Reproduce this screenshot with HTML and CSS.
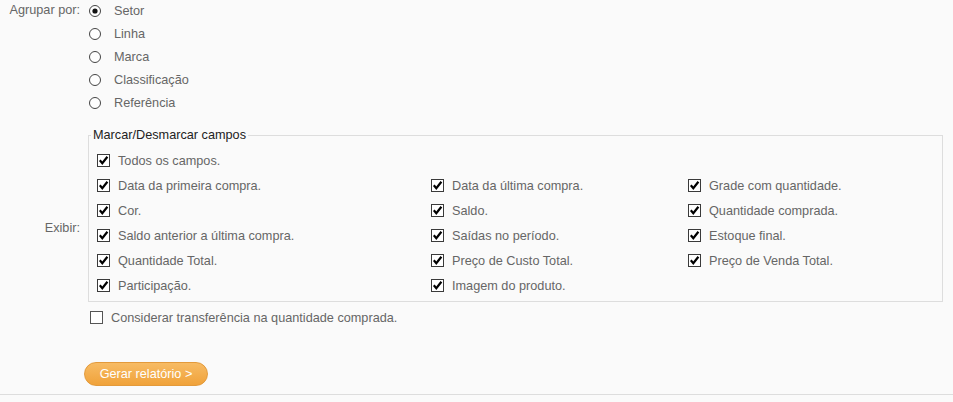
FILE: index.html
```html
<!DOCTYPE html>
<html lang="pt-BR">
<head>
    <meta charset="UTF-8">
    <title>Relatório</title>
    <link rel="stylesheet" href="styles.css">
</head>
<body>

<form class="relatorio">
    <div class="label">Agrupar por:</div>
    <div class="radios">
        <label class="opt"><svg class="radio" viewBox="0 0 12 12"><circle cx="6" cy="6" r="5.5"/><circle class="dot" cx="6" cy="6" r="2.6"/></svg>Setor</label>
        <label class="opt"><svg class="radio" viewBox="0 0 12 12"><circle cx="6" cy="6" r="5.5"/></svg>Linha</label>
        <label class="opt"><svg class="radio" viewBox="0 0 12 12"><circle cx="6" cy="6" r="5.5"/></svg>Marca</label>
        <label class="opt"><svg class="radio" viewBox="0 0 12 12"><circle cx="6" cy="6" r="5.5"/></svg>Classificação</label>
        <label class="opt"><svg class="radio" viewBox="0 0 12 12"><circle cx="6" cy="6" r="5.5"/></svg>Referência</label>
    </div>

    <div class="label exibir-label">Exibir:</div>
    <div class="exibir">
        <fieldset class="campos">
            <legend>Marcar/Desmarcar campos</legend>
            <div class="grade">
                <label class="chk todos"><svg class="box" viewBox="0 0 13 13"><rect x="0.5" y="0.5" width="12" height="12"/><polyline points="2.8,6.3 5.3,9.2 10.4,2.8"/></svg>Todos os campos.</label>

                <label class="chk"><svg class="box" viewBox="0 0 13 13"><rect x="0.5" y="0.5" width="12" height="12"/><polyline points="2.8,6.3 5.3,9.2 10.4,2.8"/></svg>Data da primeira compra.</label>
                <label class="chk"><svg class="box" viewBox="0 0 13 13"><rect x="0.5" y="0.5" width="12" height="12"/><polyline points="2.8,6.3 5.3,9.2 10.4,2.8"/></svg>Data da última compra.</label>
                <label class="chk"><svg class="box" viewBox="0 0 13 13"><rect x="0.5" y="0.5" width="12" height="12"/><polyline points="2.8,6.3 5.3,9.2 10.4,2.8"/></svg>Grade com quantidade.</label>

                <label class="chk"><svg class="box" viewBox="0 0 13 13"><rect x="0.5" y="0.5" width="12" height="12"/><polyline points="2.8,6.3 5.3,9.2 10.4,2.8"/></svg>Cor.</label>
                <label class="chk"><svg class="box" viewBox="0 0 13 13"><rect x="0.5" y="0.5" width="12" height="12"/><polyline points="2.8,6.3 5.3,9.2 10.4,2.8"/></svg>Saldo.</label>
                <label class="chk"><svg class="box" viewBox="0 0 13 13"><rect x="0.5" y="0.5" width="12" height="12"/><polyline points="2.8,6.3 5.3,9.2 10.4,2.8"/></svg>Quantidade comprada.</label>

                <label class="chk"><svg class="box" viewBox="0 0 13 13"><rect x="0.5" y="0.5" width="12" height="12"/><polyline points="2.8,6.3 5.3,9.2 10.4,2.8"/></svg>Saldo anterior a última compra.</label>
                <label class="chk"><svg class="box" viewBox="0 0 13 13"><rect x="0.5" y="0.5" width="12" height="12"/><polyline points="2.8,6.3 5.3,9.2 10.4,2.8"/></svg>Saídas no período.</label>
                <label class="chk"><svg class="box" viewBox="0 0 13 13"><rect x="0.5" y="0.5" width="12" height="12"/><polyline points="2.8,6.3 5.3,9.2 10.4,2.8"/></svg>Estoque final.</label>

                <label class="chk"><svg class="box" viewBox="0 0 13 13"><rect x="0.5" y="0.5" width="12" height="12"/><polyline points="2.8,6.3 5.3,9.2 10.4,2.8"/></svg>Quantidade Total.</label>
                <label class="chk"><svg class="box" viewBox="0 0 13 13"><rect x="0.5" y="0.5" width="12" height="12"/><polyline points="2.8,6.3 5.3,9.2 10.4,2.8"/></svg>Preço de Custo Total.</label>
                <label class="chk"><svg class="box" viewBox="0 0 13 13"><rect x="0.5" y="0.5" width="12" height="12"/><polyline points="2.8,6.3 5.3,9.2 10.4,2.8"/></svg>Preço de Venda Total.</label>

                <label class="chk"><svg class="box" viewBox="0 0 13 13"><rect x="0.5" y="0.5" width="12" height="12"/><polyline points="2.8,6.3 5.3,9.2 10.4,2.8"/></svg>Participação.</label>
                <label class="chk"><svg class="box" viewBox="0 0 13 13"><rect x="0.5" y="0.5" width="12" height="12"/><polyline points="2.8,6.3 5.3,9.2 10.4,2.8"/></svg>Imagem do produto.</label>
            </div>
        </fieldset>

        <label class="chk considerar"><svg class="box vazio" viewBox="0 0 13 13"><rect x="0.5" y="0.5" width="12" height="12"/></svg>Considerar transferência na quantidade comprada.</label>
    </div>
</form>

<div class="acoes">
    <button type="button" class="gerar">Gerar relatório &gt;</button>
</div>

</body>
</html>
```

FILE: styles.css
```css
/* Reset */
* {
    margin: 0;
    padding: 0;
    box-sizing: border-box;
}

body {
    font-family: "Liberation Sans", Arial, sans-serif;
    font-size: 12.7px;
    color: #666;
    background-color: #fafafa;
}

/* Formulário em duas colunas: rótulo + conteúdo */
.relatorio {
    display: grid;
    grid-template-columns: 88px 1fr;
    align-items: center;
    padding-right: 10px;
}

.label {
    text-align: right;
    padding-right: 8px;
    color: #666;
}

.relatorio > .label:first-child {
    align-self: start;
    line-height: 21px;
}

.exibir-label {
    padding-top: 12px; /* rótulo um pouco abaixo do centro */
}

/* Opções de agrupamento */
.radios {
    margin-top: -1px;
}

.opt {
    display: flex;
    align-items: center;
    height: 23px;
}

.radio {
    width: 12px;
    height: 12px;
    margin-left: 1px;
    margin-right: 13px;
    flex: none;
}

.radio circle {
    fill: #fff;
    stroke: #444;
    stroke-width: 1;
}

.radio .dot {
    fill: #111;
    stroke: none;
}

/* Campos exibidos */
.exibir {
    margin-top: 14px;
}

.campos {
    border: 1px solid #ddd;
    padding: 0 0 3px 2px;
}

.campos legend {
    padding: 0 2px;
    color: #222;
    line-height: 15px;
}

.grade {
    display: grid;
    grid-template-columns: 334px 257px 1fr;
    margin: 5px 0 0 6px;
}

.todos {
    grid-column: 1 / -1;
}

.chk {
    display: flex;
    align-items: center;
    height: 25px;
}

.box {
    width: 13px;
    height: 13px;
    margin-right: 8px;
    flex: none;
}

.box rect {
    fill: #fff;
    stroke: #3a3a3a;
    stroke-width: 1;
}

.box polyline {
    fill: none;
    stroke: #000;
    stroke-width: 2.2;
}

.box.vazio rect {
    stroke: #555;
}

.considerar {
    margin: 3px 0 0 2px;
}

/* Botão */
.acoes {
    padding: 32px 0 8px 84px;
    border-bottom: 1px solid #ddd;
}

.gerar {
    width: 124px;
    height: 24px;
    border: 1px solid #e39a3b;
    border-radius: 12px;
    background: linear-gradient(#f7bb64, #f0a23a);
    color: #fff;
    font-family: "Liberation Sans", Arial, sans-serif;
    font-size: 12.7px;
    cursor: pointer;
}

.gerar:hover {
    background: linear-gradient(#f0a23a, #e8942a);
}
```
